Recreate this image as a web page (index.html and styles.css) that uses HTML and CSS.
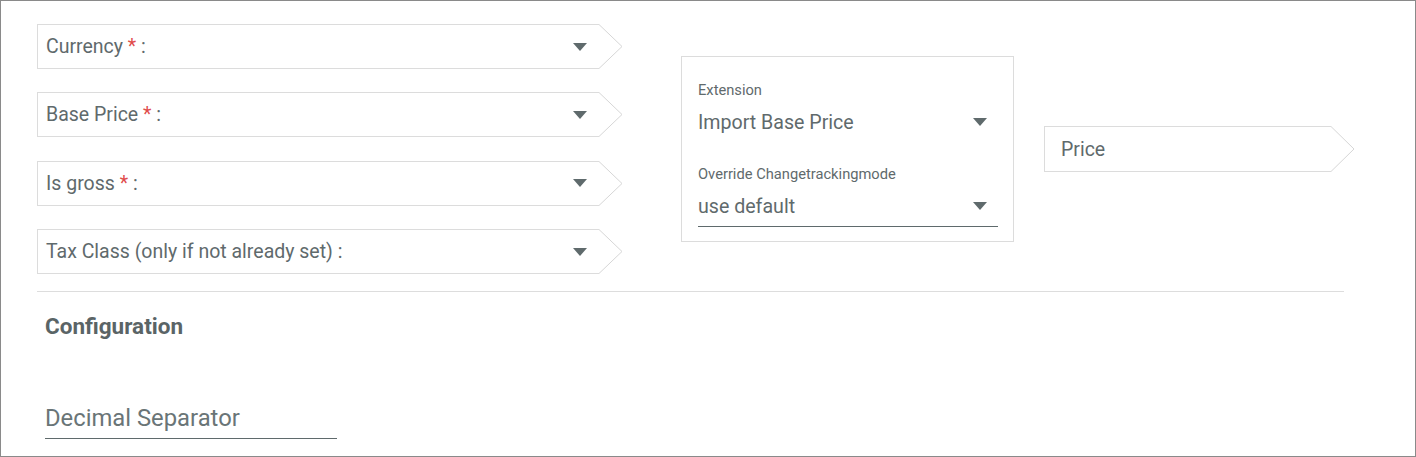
FILE: index.html
```html
<!DOCTYPE html>
<html>
<head>
<meta charset="utf-8">
<link rel="stylesheet" href="styles.css">
</head>
<body>
<div class="frame">
  <div class="top">
    <div class="fields">
      <div class="field">
        <div class="field-body"><span class="label">Currency <span class="req">*</span> :</span><span class="caret"></span></div>
        <svg class="arrow" width="24" height="45" viewBox="0 0 24 45"><polyline points="0,0.5 23,22.5 0,44.5" fill="none" stroke="#d6d6d6" stroke-width="1"/></svg>
      </div>
      <div class="field">
        <div class="field-body"><span class="label">Base Price <span class="req">*</span> :</span><span class="caret"></span></div>
        <svg class="arrow" width="24" height="45" viewBox="0 0 24 45"><polyline points="0,0.5 23,22.5 0,44.5" fill="none" stroke="#d6d6d6" stroke-width="1"/></svg>
      </div>
      <div class="field">
        <div class="field-body"><span class="label">Is gross <span class="req">*</span> :</span><span class="caret"></span></div>
        <svg class="arrow" width="24" height="45" viewBox="0 0 24 45"><polyline points="0,0.5 23,22.5 0,44.5" fill="none" stroke="#d6d6d6" stroke-width="1"/></svg>
      </div>
      <div class="field">
        <div class="field-body"><span class="label">Tax Class (only if not already set) :</span><span class="caret"></span></div>
        <svg class="arrow" width="24" height="45" viewBox="0 0 24 45"><polyline points="0,0.5 23,22.5 0,44.5" fill="none" stroke="#d6d6d6" stroke-width="1"/></svg>
      </div>
    </div>

    <div class="box">
      <div class="small-label">Extension</div>
      <div class="select"><span>Import Base Price</span><span class="caret"></span></div>
      <div class="small-label second">Override Changetrackingmode</div>
      <div class="select underlined"><span>use default</span><span class="caret"></span></div>
    </div>

    <div class="field price">
      <div class="field-body"><span class="label">Price</span></div>
      <svg class="arrow" width="24" height="46" viewBox="0 0 24 46"><polyline points="0,0.5 23,23 0,45.5" fill="none" stroke="#d6d6d6" stroke-width="1"/></svg>
    </div>
  </div>

  <div class="divider"></div>

  <h2 class="heading">Configuration</h2>

  <div class="input">Decimal Separator</div>
</div>
</body>
</html>
```

FILE: styles.css
```css
* { box-sizing: border-box; }
html, body { margin: 0; padding: 0; background: #fff; }
body {
  font-family: Roboto, "Liberation Sans", sans-serif;
  color: #5f6a6c;
}
.frame {
  width: 1416px;
  height: 457px;
  border: 1px solid #8a8a8a;
  padding: 23px 71px 0 36px;
  overflow: hidden;
}
.top {
  display: flex;
  align-items: center;
}
.fields {
  flex: none;
  display: flex;
  flex-direction: column;
  gap: 23.4px;
  width: 586px;
}
.field {
  display: flex;
  height: 45px;
}
.field-body {
  flex: 1;
  display: flex;
  align-items: center;
  justify-content: space-between;
  border: 1px solid #dcdcdc;
  border-right: none;
  padding: 0 12px 0 8px;
  font-size: 19.5px;
}
.arrow { display: block; flex: none; }
.req { color: #e04b4b; }
.caret {
  flex: none;
  width: 0;
  height: 0;
  border-left: 7.5px solid transparent;
  border-right: 7.5px solid transparent;
  border-top: 8px solid #5f6a6c;
}
.box {
  flex: none;
  margin-left: 58px;
  width: 333px;
  border: 1px solid #dcdcdc;
  padding: 24px 15px 14px 16px;
}
.small-label {
  font-size: 14.7px;
  line-height: 18px;
}
.small-label.second { margin-top: 28px; }
.select {
  margin-top: 8px;
  height: 30px;
  display: flex;
  align-items: center;
  justify-content: space-between;
  font-size: 19.6px;
  padding-right: 11px;
}
.select.underlined {
  height: 36px;
  padding-bottom: 5px;
  border-bottom: 1px solid #5f6a6c;
}
.price {
  flex: none;
  margin-left: 30px;
  width: 311px;
  height: 46px;
}
.price .field-body { padding-left: 16px; }
.divider {
  margin-top: 17px;
  height: 1px;
  background: #dddddd;
}
.heading {
  margin: 22px 0 0 8px;
  font-size: 22.5px;
  line-height: 24px;
  font-weight: 700;
  color: #5a6466;
}
.input {
  margin: 65px 0 0 8px;
  width: 292px;
  height: 36px;
  line-height: 30px;
  padding-bottom: 5px;
  font-size: 23.8px;
  color: #6a7577;
  border-bottom: 1px solid #5f6a6c;
}
```
